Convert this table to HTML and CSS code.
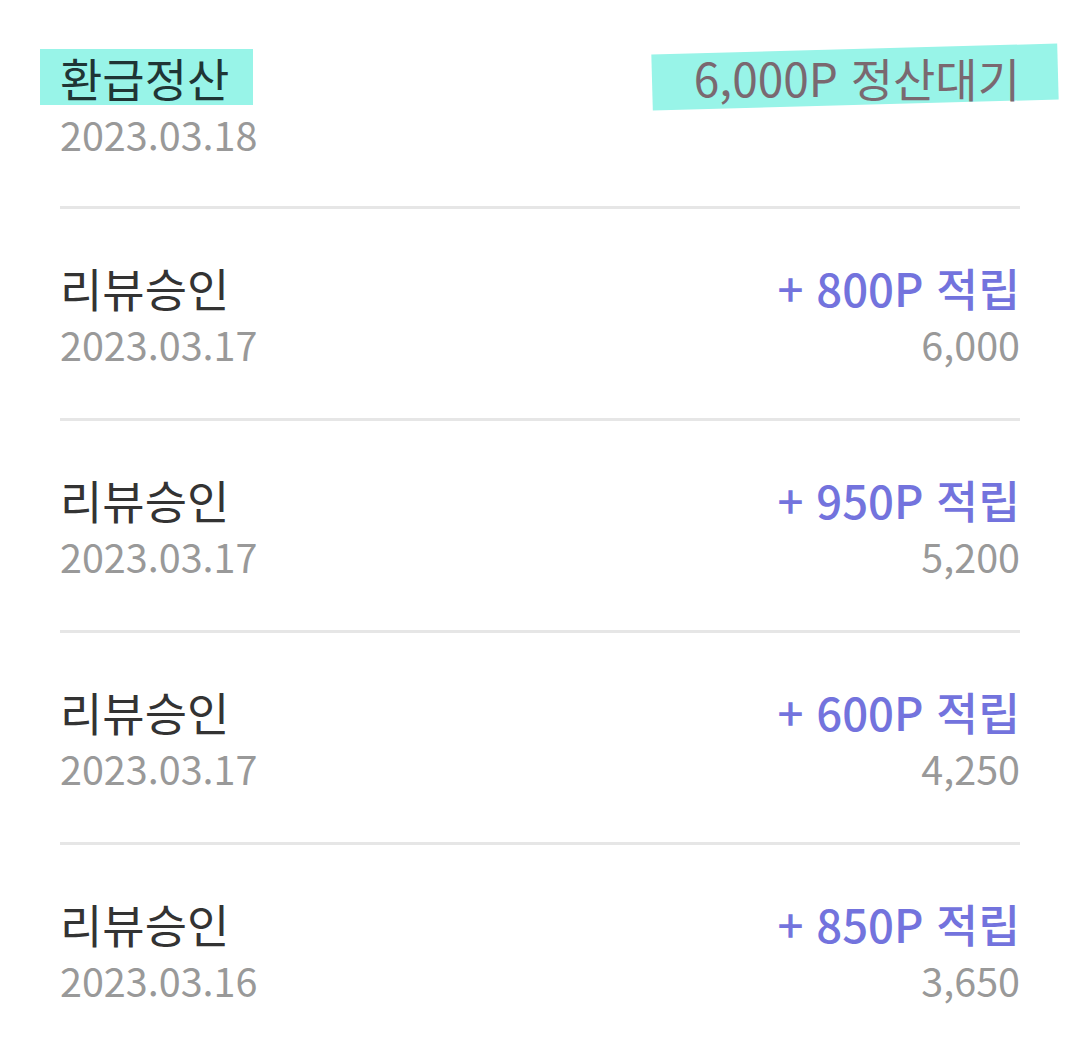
FILE: index.html
```html
<!DOCTYPE html>
<html lang="ko">
<head>
<meta charset="utf-8">
<title>포인트 내역</title>
<link rel="stylesheet" href="styles.css">
</head>
<body>
<ul class="list">
  <li class="row row-first">
    <div class="col-left">
      <div class="title"><span class="mark-left">환급정산</span></div>
      <div class="date">2023.03.18</div>
    </div>
    <div class="col-right">
      <div class="amount pending"><span class="mark-right">6,000P 정산대기</span></div>
    </div>
  </li>
  <li class="row">
    <div class="col-left">
      <div class="title">리뷰승인</div>
      <div class="date">2023.03.17</div>
    </div>
    <div class="col-right">
      <div class="amount">+ 800P 적립</div>
      <div class="balance">6,000</div>
    </div>
  </li>
  <li class="row">
    <div class="col-left">
      <div class="title">리뷰승인</div>
      <div class="date">2023.03.17</div>
    </div>
    <div class="col-right">
      <div class="amount">+ 950P 적립</div>
      <div class="balance">5,200</div>
    </div>
  </li>
  <li class="row">
    <div class="col-left">
      <div class="title">리뷰승인</div>
      <div class="date">2023.03.17</div>
    </div>
    <div class="col-right">
      <div class="amount">+ 600P 적립</div>
      <div class="balance">4,250</div>
    </div>
  </li>
  <li class="row">
    <div class="col-left">
      <div class="title">리뷰승인</div>
      <div class="date">2023.03.16</div>
    </div>
    <div class="col-right">
      <div class="amount">+ 850P 적립</div>
      <div class="balance">3,650</div>
    </div>
  </li>
</ul>
</body>
</html>
```
FILE: styles.css
```css
html, body {
  margin: 0;
  padding: 0;
  background: #ffffff;
}

body {
  font-family: "Noto Sans CJK KR", "Noto Sans", sans-serif;
  width: 1080px;
  height: 1050px;
  overflow: hidden;
}

.list {
  list-style: none;
  margin: 0;
  padding: 0 60px;
}

.row {
  display: flex;
  justify-content: space-between;
  align-items: flex-start;
  padding: 50px 0 46px;
  border-bottom: 3px solid #e6e6e6;
}

.row-first {
  padding-top: 49px;
  padding-bottom: 44px;
}

.row:last-child {
  border-bottom: none;
}

.col-left,
.col-right {
  display: flex;
  flex-direction: column;
}

.col-right {
  align-items: flex-end;
}

.title {
  font-size: 46px;
  line-height: 56px;
  height: 56px;
  color: #333333;
  font-weight: 400;
}

.date {
  margin-top: 1px;
  font-size: 39.5px;
  line-height: 56px;
  height: 56px;
  color: #999999;
}

.amount {
  font-size: 45.5px;
  line-height: 56px;
  height: 56px;
  font-weight: 500;
  color: #7373dd;
}

.balance {
  margin-top: 1px;
  font-size: 39.5px;
  line-height: 56px;
  height: 56px;
  color: #999999;
}

.mark-left {
  display: inline-block;
  vertical-align: top;
  margin-left: -20px;
  padding: 0 24px 0 20px;
  height: 56px;
  background: #98f4e8;
  color: #1f3535;
}

.pending {
  font-size: 46px;
  font-weight: 400;
}

.mark-right {
  position: relative;
  z-index: 0;
  display: inline-block;
  vertical-align: top;
  height: 56px;
  color: #7a6870;
}

.mark-right::before {
  content: "";
  position: absolute;
  top: 0;
  bottom: 0;
  left: -42px;
  right: -38px;
  background: #98f4e8;
  transform: rotate(-1.55deg);
  z-index: -1;
}
```
